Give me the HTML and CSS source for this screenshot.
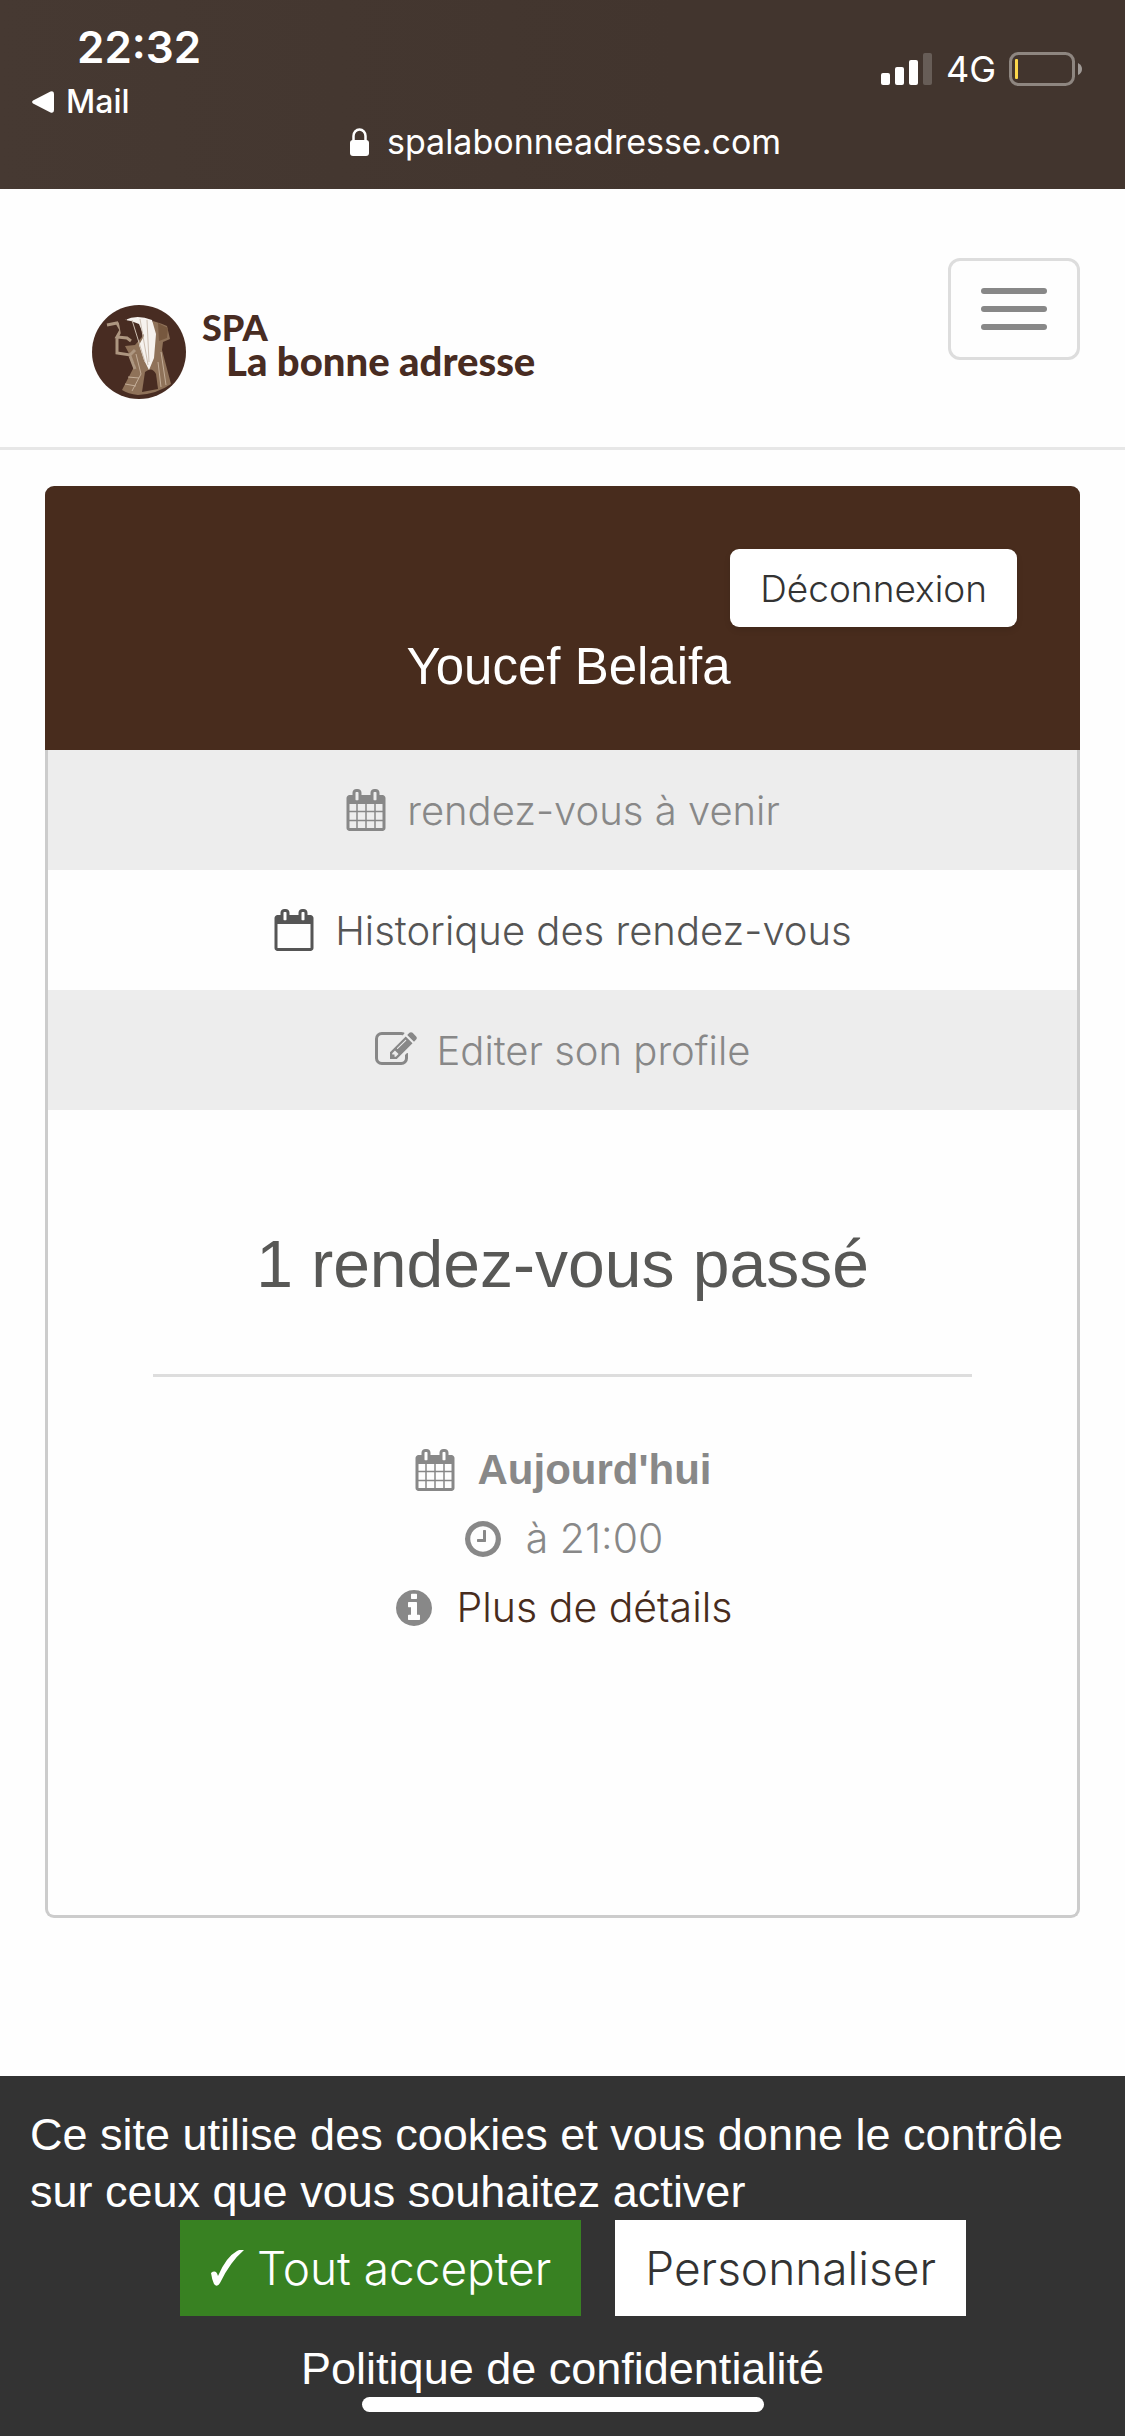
FILE: index.html
```html
<!DOCTYPE html>
<html lang="fr">
  <head>
    <meta charset="UTF-8" />
    <meta name="viewport" content="width=device-width, initial-scale=1.0" />
    <title>SPA La bonne adresse</title>
    <link rel="stylesheet" href="styles.css" />
  </head>
  <body>
    <div class="statusbar">
      <div class="status-row">
        <div class="status-left">
          <span class="time">22:32</span>
          <a class="back" href="#">
            <svg width="22" height="22" viewBox="0 0 22 22" fill="currentColor">
              <path d="M1 9.500 18.500 .6Q22 -.6 22 3V19Q22 22.600 18.500 21.400L1 12.500Q-.8 11 1 9.500z" />
            </svg>
            Mail
          </a>
        </div>
        <div class="status-right">
          <svg width="52" height="34" viewBox="0 0 52 34" fill="currentColor">
            <rect x="0" y="21" width="9" height="12" rx="2" />
            <rect x="14" y="15" width="9" height="18" rx="2" />
            <rect x="28" y="8" width="9" height="25" rx="2" />
            <rect x="42" y="1" width="9" height="32" rx="2" opacity="0.2" />
          </svg>
          <span>4G</span>
          <svg width="74" height="34" viewBox="0 0 74 34" fill="none">
            <rect x="1.500" y="1.500" width="63" height="31" rx="8" stroke="#8e8680" stroke-width="3" />
            <rect x="6" y="7" width="3" height="20" rx="1" fill="#fbd74b" />
            <path d="M69 11q4 2 4 6t-4 6z" fill="#a09a96" />
          </svg>
        </div>
      </div>
      <div class="url">
        <svg width="19" height="28" viewBox="0 0 19 28">
          <path d="M3.500 13V8a6 6.500 0 0 1 12 0v5" fill="none" stroke="currentColor" stroke-width="2.500" />
          <rect y="12" width="19" height="16" rx="3" fill="currentColor" />
        </svg>
        <span>spalabonneadresse.com</span>
      </div>
    </div>

    <header class="navbar">
      <a class="brand" href="#">
        <svg width="96" height="96" viewBox="0 0 96 96">
          <circle cx="48" cy="48" r="47" fill="#482c22" />
          <path d="M62 17q10 3 14 5l3 13-7 3-1 8 9 34q-14 10-33 11-10-1-16-5l13-25-10-19 10-1 7-8z" fill="#8f7259" />
          <path d="M34 16q12-6 27 0l4 14-2 24-5 12-5-10-5-15 5-9-5-12-8-3z" fill="#f6f2ee" />
          <path d="M41 16l13 42M49 15l8 46M56 16l2 42" stroke="#cdbfb2" stroke-width="1" fill="none" />
          <path d="M16 21l10-2 4 7-4 7 10 1 4 3M26 33v16l13 2 5-5M39 52l5 13" fill="none" stroke="#ad9680" stroke-width="3" />
          <path d="M28 19l8-4-2 11 7 6-11-1z" fill="#482c22" />
          <path d="M67 19l10 5-1 10-8 3z" fill="#77583f" />
          <path d="M51 88l3-20q7-6 11 2l2 15z" fill="#482c22" />
          <path d="M45 50l5 20-9 17M70 48l5 33M37 73l11 1M34 80l11 2M67 58l3 25" stroke="#c3ad98" stroke-width="1" fill="none" />
        </svg>
        <span class="brand-name">SPA<span class="brand-sub">La bonne adresse</span></span>
      </a>
      <button class="toggle" type="button" aria-label="Menu">
        <span class="bar"></span>
        <span class="bar"></span>
        <span class="bar"></span>
      </button>
    </header>

    <main class="card">
      <div class="card-header">
        <button class="logout" type="button">Déconnexion</button>
        <h2 class="name">Youcef Belaifa</h2>
      </div>

      <nav class="tabs">
        <a class="tab" href="#">
          <svg class="icon" viewBox="0 0 1792 1792">
            <path id="calendar" d="M192 1664h288v-288h-288v288zm352 0h320v-288h-320v288zm-352-352h288v-320h-288v320zm352 0h320v-320h-320v320zm-352-384h288v-288h-288v288zm736 736h320v-288h-320v288zm-384-736h320v-288h-320v288zm768 736h288v-288h-288v288zm-384-352h320v-320h-320v320zm-352-864v-288q0-13-9.500-22.500t-22.500-9.500h-64q-13 0-22.500 9.500t-9.500 22.500v288q0 13 9.500 22.500t22.500 9.500h64q13 0 22.500-9.500t9.500-22.500zm736 864h288v-320h-288v320zm-384-384h320v-288h-320v288zm384 0h288v-288h-288v288zm32-480v-288q0-13-9.500-22.500t-22.500-9.500h-64q-13 0-22.500 9.500t-9.500 22.500v288q0 13 9.500 22.500t22.500 9.500h64q13 0 22.500-9.500t9.500-22.500zm384-64v1280q0 52-38 90t-90 38h-1408q-52 0-90-38t-38-90v-1280q0-52 38-90t90-38h128v-96q0-66 47-113t113-47h64q66 0 113 47t47 113v96h384v-96q0-66 47-113t113-47h64q66 0 113 47t47 113v96h128q52 0 90 38t38 90z" />
          </svg>
          rendez-vous à venir
        </a>
        <a class="tab active" href="#">
          <svg class="icon" viewBox="0 0 1792 1792">
            <path d="M192 1664h1408v-1024h-1408v1024zm384-1216v-288q0-13-9.500-22.500t-22.500-9.500h-64q-13 0-22.500 9.500t-9.500 22.500v288q0 13 9.500 22.500t22.500 9.500h64q13 0 22.500-9.500t9.500-22.500zm768 0v-288q0-13-9.500-22.500t-22.500-9.500h-64q-13 0-22.500 9.500t-9.500 22.500v288q0 13 9.500 22.500t22.500 9.500h64q13 0 22.500-9.500t9.500-22.500zm384-64v1280q0 52-38 90t-90 38h-1408q-52 0-90-38t-38-90v-1280q0-52 38-90t90-38h128v-96q0-66 47-113t113-47h64q66 0 113 47t47 113v96h384v-96q0-66 47-113t113-47h64q66 0 113 47t47 113v96h128q52 0 90 38t38 90z" />
          </svg>
          Historique des rendez-vous
        </a>
        <a class="tab" href="#">
          <svg class="icon" viewBox="0 0 1792 1792">
            <path d="M888 1184l116-116-152-152-116 116v56h96v96h56zm440-720q-16-16-33 1l-350 350q-17 17-1 33t33-1l350-350q17-17 1-33zm80 594v190q0 119-84.500 203.500t-203.500 84.500h-832q-119 0-203.500-84.500t-84.500-203.500v-832q0-119 84.500-203.500t203.500-84.500h832q63 0 117 25 15 7 18 23 3 17-9 29l-49 49q-14 14-32 8-23-6-45-6h-832q-66 0-113 47t-47 113v832q0 66 47 113t113 47h832q66 0 113-47t47-113v-126q0-13 9-22l64-64q15-15 35-7t20 29zm-96-738l288 288-672 672h-288v-288zm444 132l-92 92-288-288 92-92q28-28 68-28t68 28l152 152q28 28 28 68t-28 68z" />
          </svg>
          Editer son profile
        </a>
      </nav>

      <section class="history">
        <h1 class="title">1 rendez-vous passé</h1>
        <hr class="rule" />
        <div class="row">
          <svg class="icon" viewBox="0 0 1792 1792"><use href="#calendar" /></svg>
          <strong>Aujourd'hui</strong>
        </div>
        <div class="row">
          <svg class="icon" viewBox="0 0 1792 1792">
            <path d="M1024 544v448q0 14-9 23t-23 9h-320q-14 0-23-9t-9-23v-64q0-14 9-23t23-9h224v-352q0-14 9-23t23-9h64q14 0 23 9t9 23zm416 352q0-148-73-273t-198-198-273-73-273 73-198 198-73 273 73 273 198 198 273 73 273-73 198-198 73-273zm224 0q0 209-103 385.500t-279.500 279.500-385.500 103-385.500-103-279.500-279.500-103-385.500 103-385.500 279.500-279.500 385.500-103 385.500 103 279.500 279.500 103 385.500z" />
          </svg>
          <span>à 21:00</span>
        </div>
        <div class="row">
          <svg class="icon" viewBox="0 0 1792 1792">
            <path d="M1152 1376v-160q0-14-9-23t-23-9h-96v-512q0-14-9-23t-23-9h-320q-14 0-23 9t-9 23v160q0 14 9 23t23 9h96v320h-96q-14 0-23 9t-9 23v160q0 14 9 23t23 9h448q14 0 23-9t9-23zm-128-896v-160q0-14-9-23t-23-9h-192q-14 0-23 9t-9 23v160q0 14 9 23t23 9h192q14 0 23-9t9-23zm640 416q0 209-103 385.500t-279.500 279.500-385.500 103-385.500-103-279.500-279.500-103-385.500 103-385.500 279.500-279.500 385.500-103 385.500 103 279.500 279.500 103 385.500z" />
          </svg>
          <a class="details" href="#">Plus de détails</a>
        </div>
      </section>
    </main>

    <div class="cookies">
      <p class="cookies-text">
        Ce site utilise des cookies et vous donne le contrôle sur ceux que vous
        souhaitez activer
      </p>
      <div class="cookies-actions">
        <button class="btn accept" type="button">
          <svg width="34" height="36" viewBox="0 0 34 36" fill="currentColor">
            <path d="M1 23q5-4 7 3Q16 7 27 1q3-2 7-1Q20 12 10 33q-3 5-6 1Q2 30 1 23z" />
          </svg>
          Tout accepter
        </button>
        <button class="btn" type="button">Personnaliser</button>
      </div>
      <a class="policy" href="#">Politique de confidentialité</a>
      <div class="home-bar"></div>
    </div>
  </body>
</html>
```

FILE: styles.css
```css
* {
  box-sizing: border-box;
}

body {
  display: flex;
  flex-direction: column;
  min-height: 100vh;
  margin: 0;
  background: #fefefe;
  color: #888;
  font-family: "Liberation Sans", Arial, sans-serif;
  font-size: 42px;
}

a {
  color: inherit;
  text-decoration: none;
}

button {
  cursor: pointer;
  border: none;
  font-family: Inter, sans-serif;
  font-weight: 300;
}

svg {
  flex: none;
}

/* phone bar */
.statusbar {
  padding: 20px 42px 27px 32px;
  background: linear-gradient(to right, #463932, #42352e 60%);
  color: #fff;
  font-family: Inter, sans-serif;
  font-size: 34px;
  line-height: 40px;
}

.status-row {
  display: flex;
  justify-content: space-between;
  align-items: center;
}

.status-left {
  display: flex;
  flex-direction: column;
  gap: 8px;

  .time {
    padding-left: 45px;
    font-size: 44px;
    font-weight: 600;
    line-height: 54px;
  }

  .back {
    display: flex;
    align-items: center;
    gap: 12px;
    font-size: 32px;
    font-weight: 500;
  }
}

.status-right {
  display: flex;
  align-items: center;
  gap: 13px;
  padding-bottom: 4px;
  font-size: 36px;
}

.url {
  display: flex;
  justify-content: center;
  align-items: center;
  gap: 18px;
  padding-left: 16px;
}

/* header */
.navbar {
  display: flex;
  justify-content: space-between;
  align-items: flex-start;
  padding: 69px 45px 87px 91px;
  border-bottom: 3px solid #e7e7e7;
}

.brand {
  display: flex;
  gap: 15px;
  margin: 46px 0 -40px;
  color: #482c22;

  .brand-name {
    padding-top: 6px;
    font-family: Lato, sans-serif;
    font-size: 36px;
    font-weight: 900;
    line-height: 34px;
  }

  .brand-sub {
    display: block;
    padding-left: 24px;
    font-size: 40px;
  }
}

.toggle {
  display: flex;
  flex-direction: column;
  justify-content: center;
  gap: 12px;
  height: 102px;
  padding: 0 30px;
  border: 3px solid #ddd;
  border-radius: 12px;
  background: transparent;

  .bar {
    width: 66px;
    height: 6px;
    border-radius: 3px;
    background: #888;
  }
}

/* account card */
.card {
  margin: 36px 45px;
  border: 3px solid #ccc;
  border-top: none;
  border-radius: 9px;
}

.card-header {
  display: flex;
  flex-direction: column;
  margin: 0 -3px;
  padding: 63px 63px 53px;
  border-radius: 9px 9px 0 0;
  background: #482c1d;
}

.logout {
  align-self: flex-end;
  height: 78px;
  padding: 0 30px;
  border-radius: 9px;
  background: #fff;
  color: #333;
  font-size: 37px;
  box-shadow: 0 3px 6px rgba(0, 0, 0, 0.1);
}

.name {
  margin: 10px 0 0 12px;
  color: #fff;
  font-size: 51px;
  font-weight: 400;
  line-height: 60px;
  text-align: center;
}

.icon {
  width: 42px;
  height: 42px;
  fill: #888;
}

.tab {
  display: flex;
  justify-content: center;
  align-items: center;
  gap: 20px;
  height: 120px;
  background: #ededed;
  font-family: Inter, sans-serif;
  font-size: 40px;
  font-weight: 300;

  &.active {
    background: #fefefe;
    color: #555;

    .icon {
      fill: #555;
    }
  }
}

.history {
  padding: 114px 105px 273px;
}

.title {
  margin: 0 0 69px;
  color: #585856;
  font-size: 66px;
  font-weight: 400;
  line-height: 81px;
  text-align: center;
}

.rule {
  margin: 0 0 58px;
  border: none;
  border-top: 3px solid #ddd;
}

.row {
  display: flex;
  justify-content: center;
  align-items: center;
  gap: 22px;
  font-family: Inter, sans-serif;
  font-size: 41px;
  font-weight: 300;
  line-height: 69px;

  strong {
    font-family: "Liberation Sans", Arial, sans-serif;
    font-size: 42px;
    font-weight: 700;
  }

  .details {
    color: #482c1d;
  }
}

/* cookie banner */
.cookies {
  display: flex;
  flex-direction: column;
  margin-top: auto;
  padding: 30px 30px 24px;
  background: #333;
  color: #fff;
  font-size: 45px;
  line-height: 57px;
}

.cookies-text {
  margin: 0;
}

.cookies-actions {
  display: flex;
  justify-content: center;
  gap: 34px;
  padding: 0 0 24px 21px;
}

.btn {
  display: flex;
  align-items: center;
  gap: 13px;
  height: 96px;
  padding: 0 30px;
  background: #fff;
  color: #333;
  font-size: 46px;

  &.accept {
    background: #388122;
    color: #fff;
  }
}

.policy {
  align-self: center;
}

.home-bar {
  align-self: center;
  width: 402px;
  height: 15px;
  border-radius: 8px;
  background: #fff;
}
```
